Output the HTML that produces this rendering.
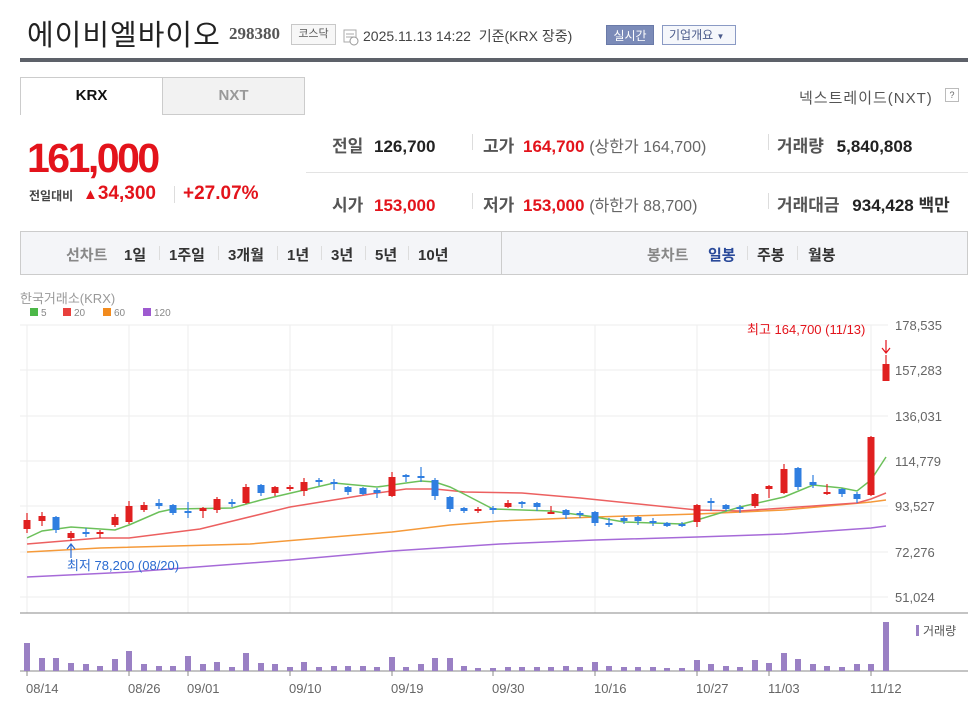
<!DOCTYPE html>
<html><head><meta charset="utf-8">
<style>
*{margin:0;padding:0;box-sizing:border-box}
body{width:968px;height:723px;background:#fff;font-family:"Liberation Sans","Noto Sans CJK KR",sans-serif;position:relative;overflow:hidden;color:#333}
.a{position:absolute;white-space:nowrap}
.b{font-weight:bold}
.red{color:#e3131b}
.p{position:absolute;top:244px;font-size:15px;font-weight:bold;color:#333;white-space:nowrap}
.s{position:absolute;top:246px;width:1px;height:14px;background:#ddd}
</style></head><body>
<div class="a" style="left:27px;top:12px;font-size:29px;color:#222;letter-spacing:1px">에이비엘바이오</div>
<div class="a b" style="left:229px;top:24px;font-size:17px;color:#555;font-family:'Liberation Serif',serif">298380</div>
<div class="a" style="left:291px;top:24px;width:45px;height:21px;border:1px solid #c8c8c8;background:#f7f7f7;font-size:11px;color:#555;text-align:center;line-height:19px">코스닥</div>
<svg class="a" style="left:343px;top:28px" width="16" height="18"><rect x="1" y="2" width="12" height="12" fill="none" stroke="#aaa"/><line x1="3" y1="6" x2="11" y2="6" stroke="#aaa"/><line x1="3" y1="9" x2="11" y2="9" stroke="#aaa"/><circle cx="11" cy="13" r="4" fill="#fff" stroke="#999"/></svg>
<div class="a" style="left:363px;top:26px;font-size:14px;color:#444">2025.11.13 14:22 &nbsp;기준(KRX 장중)</div>
<div class="a" style="left:606px;top:25px;width:48px;height:20px;background:#7b8bb8;color:#fff;font-size:12px;text-align:center;line-height:20px;border:1px solid #6a7aa8">실시간</div>
<div class="a" style="left:662px;top:25px;width:74px;height:20px;border:1px solid #8a9ac4;background:#f5f7fb;color:#4a5a8a;font-size:12px;line-height:18px;padding-left:6px">기업개요 <span style="font-size:8px">▼</span></div>
<div class="a" style="left:20px;top:58px;width:948px;height:4px;background:#5d6169"></div>

<div class="a" style="left:20px;top:77px;width:143px;height:38px;border:1px solid #ccc;border-bottom:none;text-align:center;line-height:36px;font-size:15px;font-weight:bold;color:#111">KRX</div>
<div class="a" style="left:162px;top:77px;width:143px;height:38px;border:1px solid #ccc;background:#f2f2f2;text-align:center;line-height:36px;font-size:15px;font-weight:bold;color:#999">NXT</div>
<div class="a" style="left:799px;top:87px;font-size:15px;color:#555;letter-spacing:1px">넥스트레이드(NXT)</div>
<div class="a" style="left:945px;top:88px;width:14px;height:14px;border:1px solid #bbb;font-size:9px;text-align:center;line-height:12px;color:#666">?</div>

<div class="a b red" style="left:27px;top:135px;font-size:41px;letter-spacing:-2.5px">161,000</div>
<div class="a b" style="left:29px;top:187px;font-size:12px;color:#444">전일대비</div>
<div class="a b red" style="left:83px;top:183px;font-size:19px"><span style="font-size:15px">▲</span>34,300</div>
<div class="a" style="left:174px;top:186px;width:1px;height:17px;background:#ddd"></div>
<div class="a b red" style="left:183px;top:183px;font-size:19px">+27.07%</div>

<div class="a" style="left:306px;top:172px;width:662px;height:1px;background:#e3e3e3"></div>
<div class="a b" style="left:332px;top:132px;font-size:17px;color:#555">전일 <span style="color:#222;margin-left:6px">126,700</span></div>
<div class="a b" style="left:332px;top:191px;font-size:17px;color:#555">시가 <span class="red" style="margin-left:6px">153,000</span></div>
<div class="a" style="left:472px;top:134px;width:1px;height:16px;background:#ddd"></div>
<div class="a" style="left:472px;top:193px;width:1px;height:16px;background:#ddd"></div>
<div class="a b" style="left:483px;top:132px;font-size:17px;color:#555">고가 <span class="red" style="margin-left:4px">164,700</span> <span style="font-weight:normal;color:#666;font-size:16px">(상한가 164,700)</span></div>
<div class="a b" style="left:483px;top:191px;font-size:17px;color:#555">저가 <span class="red" style="margin-left:4px">153,000</span> <span style="font-weight:normal;color:#666;font-size:16px">(하한가 88,700)</span></div>
<div class="a" style="left:768px;top:134px;width:1px;height:16px;background:#ddd"></div>
<div class="a" style="left:768px;top:193px;width:1px;height:16px;background:#ddd"></div>
<div class="a b" style="left:777px;top:132px;font-size:17px;color:#555">거래량 <span style="color:#222;margin-left:8px">5,840,808</span></div>
<div class="a b" style="left:777px;top:191px;font-size:17px;color:#555">거래대금 <span style="color:#222;margin-left:8px">934,428</span> <span style="color:#333">백만</span></div>

<div class="a" style="left:20px;top:231px;width:948px;height:44px;background:#f4f5f8;border:1px solid #ccc"></div>
<div class="a" style="left:501px;top:232px;width:1px;height:42px;background:#ccc"></div>
<div class="p" style="left:66px;color:#888">선차트</div>
<div class="p" style="left:124px">1일</div><div class="s" style="left:159px"></div>
<div class="p" style="left:169px">1주일</div><div class="s" style="left:218px"></div>
<div class="p" style="left:228px">3개월</div><div class="s" style="left:277px"></div>
<div class="p" style="left:287px">1년</div><div class="s" style="left:321px"></div>
<div class="p" style="left:331px">3년</div><div class="s" style="left:365px"></div>
<div class="p" style="left:375px">5년</div><div class="s" style="left:408px"></div>
<div class="p" style="left:418px">10년</div>
<div class="p" style="left:647px;color:#888">봉차트</div>
<div class="p" style="left:708px;color:#2a4a9a">일봉</div><div class="s" style="left:747px"></div>
<div class="p" style="left:757px">주봉</div><div class="s" style="left:797px"></div>
<div class="p" style="left:808px">월봉</div>

<svg id="ch" class="a" style="left:0;top:280px" width="968" height="443" font-family="Liberation Sans, Noto Sans CJK KR, sans-serif">
<text x="20" y="23" font-size="13" fill="#999">한국거래소(KRX)</text>
<rect x="30" y="28" width="8" height="8" fill="#4cb848"/><text x="41" y="36" font-size="10" fill="#888">5</text>
<rect x="63" y="28" width="8" height="8" fill="#e8403c"/><text x="74" y="36" font-size="10" fill="#888">20</text>
<rect x="103" y="28" width="8" height="8" fill="#f28b1e"/><text x="114" y="36" font-size="10" fill="#888">60</text>
<rect x="143" y="28" width="8" height="8" fill="#9e5ad0"/><text x="154" y="36" font-size="10" fill="#888">120</text>
<g id="grid" stroke="#eee" stroke-width="1"></g>
<line x1="20" y1="613" x2="968" y2="613" stroke="#888" transform="translate(0,-280)"/>
<line x1="20" y1="671" x2="968" y2="671" stroke="#888" transform="translate(0,-280)"/>
<g id="ma" fill="none" stroke-width="1.5" transform="translate(0,-280)"></g>
<g id="cd" transform="translate(0,-280)"></g>
<g id="vol" fill="#9a80c4" transform="translate(0,-280)"></g>
<g font-size="13" fill="#666" transform="translate(0,-280)">
<text x="895" y="330">178,535</text><text x="895" y="375">157,283</text><text x="895" y="421">136,031</text><text x="895" y="466">114,779</text><text x="895" y="511">93,527</text><text x="895" y="557">72,276</text><text x="895" y="602">51,024</text>
<text x="26" y="693">08/14</text><text x="128" y="693">08/26</text><text x="187" y="693">09/01</text><text x="289" y="693">09/10</text><text x="391" y="693">09/19</text><text x="492" y="693">09/30</text><text x="594" y="693">10/16</text><text x="696" y="693">10/27</text><text x="768" y="693">11/03</text><text x="870" y="693">11/12</text>
<text x="747" y="334" fill="#e3131b">최고 164,700 (11/13)</text>
<text x="67" y="570" fill="#2a6ad0">최저 78,200 (08/20)</text>
<rect x="916" y="625" width="3" height="11" fill="#9a80c4"/><text x="923" y="635" font-size="12" fill="#555">거래량</text>
</g>
<g transform="translate(0,-280)">
<path d="M886 340 V352 M882 348 L886 353 L890 348" stroke="#e3131b" fill="none" stroke-width="1.2"/>
<path d="M71 558 V545 M67 549 L71 544 L75 549" stroke="#2a6ad0" fill="none" stroke-width="1.2"/>
</g>
</svg>
<script>
var ns="http://www.w3.org/2000/svg";
function el(p,t,a){var e=document.createElementNS(ns,t);for(var k in a)e.setAttribute(k,a[k]);p.appendChild(e);return e;}
var g=document.getElementById('grid');g.setAttribute('transform','translate(0,-280)');
[325,370,416,461,506,552,597].forEach(function(y){el(g,'line',{x1:20,y1:y,x2:888,y2:y})});
[27,129,188,290,392,493,595,697,769,871].forEach(function(x){el(g,'line',{x1:x,y1:325,x2:x,y2:613});el(g,'line',{x1:x,y1:671,x2:x,y2:676,stroke:'#888'})});
var C=[[27,'r',520,529,513,533],[42,'r',516,521,512,526],[56,'b',517,530,516,533],[71,'r',533,538,531,541],[86,'b',532,534,528,537],[100,'r',532,534,530,538],[115,'r',517,525,514,527],[129,'r',506,522,501,524],[144,'r',505,510,502,512],[159,'b',503,506,499,509],[173,'b',505,513,504,515],[188,'b',511,513,502,518],[203,'r',508,511,507,518],[217,'r',499,510,497,513],[232,'b',502,504,499,507],[246,'r',487,503,484,504],[261,'b',485,493,484,496],[275,'r',487,493,486,496],[290,'r',487,489,485,491],[304,'r',482,491,478,496],[319,'b',480,482,478,486],[334,'b',482,484,479,490],[348,'b',487,492,486,495],[363,'b',488,494,487,495],[377,'b',490,493,488,498],[392,'r',477,496,472,497],[406,'b',475,477,474,482],[421,'b',476,478,467,482],[435,'b',480,496,478,500],[450,'b',497,509,496,512],[464,'b',508,511,507,513],[478,'r',509,511,507,513],[493,'b',508,510,506,514],[508,'r',503,507,500,508],[522,'b',502,504,501,508],[537,'b',503,507,502,511],[551,'r',512,513,506,514],[566,'b',510,515,509,519],[580,'b',513,515,511,518],[595,'b',512,523,511,526],[609,'b',523,524,518,527],[624,'b',518,521,516,524],[638,'b',517,521,516,525],[653,'b',521,523,518,526],[667,'b',523,526,522,527],[682,'b',524,526,522,527],[697,'r',505,522,504,527],[711,'b',501,503,498,511],[726,'b',505,509,504,511],[740,'b',507,509,505,513],[755,'r',494,506,493,508],[769,'r',486,489,485,498],[784,'r',469,493,464,494],[798,'b',468,487,467,490],[813,'b',482,485,475,488],[827,'r',492,494,484,495],[842,'b',489,494,488,497],[857,'b',494,499,492,503],[871,'r',437,495,436,496],[886,'r',364,381,355,381]];
var cd=document.getElementById('cd');
C.forEach(function(c){var col=c[1]=='r'?'#e02020':'#2f7ee0';el(cd,'line',{x1:c[0],y1:c[4],x2:c[0],y2:c[5],stroke:col,'stroke-width':1.2});el(cd,'rect',{x:c[0]-3.5,y:c[2],width:7,height:Math.max(2,c[3]-c[2]),fill:col});});
var M=document.getElementById('ma');
function pl(pts,col){el(M,'polyline',{points:pts,stroke:col});}
pl("27,577 130,572 290,560 392,551 500,544 595,540 697,537 784,534 871,528 886,526",'#a66ad8');
pl("27,552 100,548 250,544 392,532 450,525 500,521 595,517 697,514 784,510 871,502 886,500",'#f59a3a');
pl("27,544 100,538 129,538 200,529 290,507 377,493 406,489 435,489 465,492 522,493 580,498 697,510 740,511 784,508 842,504 857,503 871,499 886,493",'#ec6060');
pl("27,538 42,531 71,527 115,530 129,525 159,512 173,509 232,508 261,500 304,490 334,483 377,487 406,483 421,481 435,482 450,487 464,494 493,509 551,511 595,517 624,522 682,524 697,520 740,507 784,497 813,485 842,488 857,491 871,480 886,457",'#6cc05a');
var V=[643,658,658,663,664,666,659,651,664,666,666,656,664,662,667,653,663,664,667,662,667,666,666,666,667,657,667,664,658,658,666,668,668,667,667,667,667,666,667,662,666,667,667,667,668,668,660,664,666,667,660,663,653,659,664,666,667,664,664,663,664,622];
var vg=document.getElementById('vol');
V.forEach(function(v,i){var x=C[i]?C[i][0]:886;el(vg,'rect',{x:x-3,y:v,width:6,height:671-v});});
</script>
</body></html>
